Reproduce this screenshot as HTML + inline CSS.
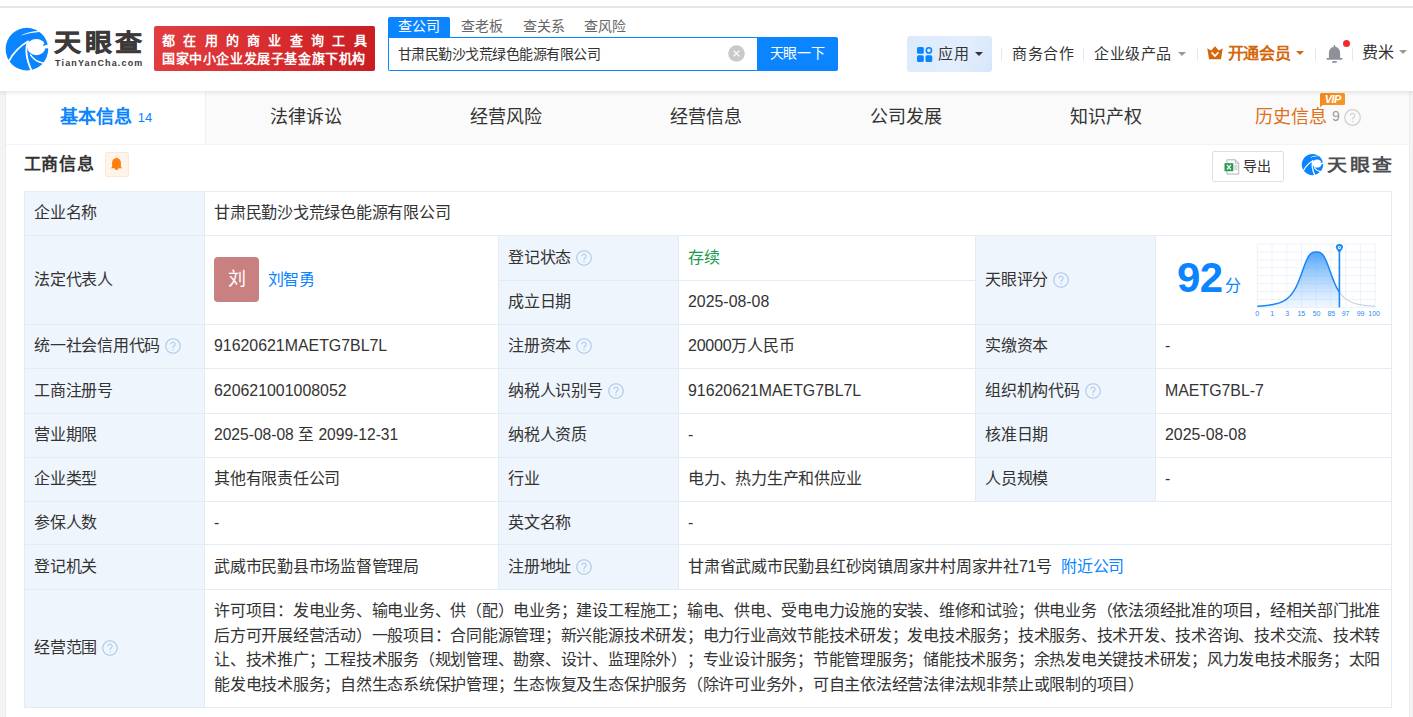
<!DOCTYPE html><html lang="zh-CN"><head><meta charset="utf-8"><style>
*{box-sizing:border-box;margin:0;padding:0}
html,body{width:1413px;height:717px;overflow:hidden}
body{position:relative;background:#f4f4f4;text-spacing-trim:space-all;font-family:"Liberation Sans",sans-serif;color:#333}
.a{position:absolute;white-space:nowrap}
.t{position:absolute;white-space:nowrap;font-size:16px;letter-spacing:-0.24px;line-height:20px;color:#333}
.n{letter-spacing:0;font-size:15.9px}
.hl{position:absolute;height:1px;background:#e3ecf5}
.vl{position:absolute;width:1px;background:#e3ecf5}
.lab{position:absolute;background:#eff5fc}
.q{display:inline-block;width:16px;height:16px;vertical-align:-3px;margin-left:5px}
.tab{position:absolute;height:53px;text-align:center;font-size:18px;line-height:53px;color:#333}
.nav{position:absolute;font-size:15px;letter-spacing:0.5px;line-height:20px;color:#333;white-space:nowrap}
.sep{position:absolute;width:1px;height:13px;background:#e6e9ee;top:47.5px}
.caret{position:absolute;width:0;height:0;border-left:4px solid transparent;border-right:4px solid transparent;border-top:4.5px solid #999}
</style></head><body>
<div class="a" style="left:0;top:0;width:1413px;height:6px;background:#fff"></div>
<div class="a" style="left:0;top:6px;width:1413px;height:2px;background:#e6e6e6"></div>
<div class="a" style="left:0;top:8px;width:1413px;height:83px;background:#fff"></div>
<svg class="a" style="left:4px;top:26px" width="48" height="46" viewBox="0 0 48 46"><circle cx="22.9" cy="23.1" r="21.3" fill="#0a84ff"/><ellipse cx="32.3" cy="21.1" rx="9.2" ry="8.1" fill="#fff"/><path d="M38 19.2 L45 18.6 L45 22.2 L39 22.6 Z" fill="#fff"/><path d="M41.2 16.6 C42.2 17.8 42.3 19.2 41.2 19.6 L38.5 19.8 Z" fill="#0a84ff"/><path d="M16 9.8 Q25 5.0 35.2 5.0 L35.2 5.9 Q25.5 6.6 16 9.8 Z" fill="#fff"/><path d="M5.0 35 Q11.5 22.5 24.6 15.0" fill="none" stroke="#fff" stroke-width="1.7"/><path d="M24.2 15.2 C21.4 22 21.6 32 27.6 44.8" fill="none" stroke="#fff" stroke-width="1.9"/><path d="M26.2 28.4 Q30.5 35.6 39.6 37.2" fill="none" stroke="#fff" stroke-width="1.4"/></svg>
<div class="a" style="left:54px;top:24px;font-size:27px;line-height:36px;font-weight:bold;letter-spacing:3.6px;color:#3d3939;-webkit-text-stroke:0.6px #3d3939;transform:scaleY(0.875);transform-origin:0 30px">天眼查</div>
<div class="a" style="left:55px;top:57px;font-size:9px;line-height:12px;font-weight:bold;letter-spacing:1.15px;color:#3d3939">TianYanCha.com</div>
<div class="a" style="left:154px;top:26px;width:221px;height:44.6px;border-radius:2px;background:linear-gradient(100deg,#e23d3f 0%,#d62a2d 60%,#c81e22 100%)"></div>
<div class="a" style="left:162px;top:32px;font-size:13px;line-height:18px;font-weight:bold;letter-spacing:8.3px;color:#fff">都在用的商业查询工具</div>
<div class="a" style="left:162px;top:50px;font-size:13px;line-height:18px;font-weight:bold;letter-spacing:0.6px;color:#fff">国家中小企业发展子基金旗下机构</div>
<div class="a" style="left:388px;top:17px;width:61.5px;height:21px;background:#0a84ff;border-radius:2px 2px 0 0"></div>
<div class="a" style="left:397.5px;top:16px;font-size:14px;line-height:20px;color:#fff">查公司</div>
<div class="a" style="left:460.5px;top:16px;font-size:14px;line-height:20px;color:#666">查老板</div>
<div class="a" style="left:522.5px;top:16px;font-size:14px;line-height:20px;color:#666">查关系</div>
<div class="a" style="left:584px;top:16px;font-size:14px;line-height:20px;color:#666">查风险</div>
<div class="a" style="left:388px;top:37px;width:370px;height:33.6px;border:1px solid #0a84ff;border-right:none;border-radius:0 0 0 2px;background:#fff"></div>
<div class="a" style="left:397.5px;top:44px;font-size:14px;line-height:20px;letter-spacing:-0.5px;color:#333">甘肃民勤沙戈荒绿色能源有限公司</div>
<svg class="a" style="left:727.5px;top:44.5px" width="17" height="17" viewBox="0 0 17 17"><circle cx="8.5" cy="8.5" r="8.3" fill="#c9c9c9"/><path d="M5.6 5.6 L11.4 11.4 M11.4 5.6 L5.6 11.4" stroke="#fff" stroke-width="1.3"/></svg>
<div class="a" style="left:757px;top:37px;width:81px;height:33.6px;background:#0a84ff;border-radius:0 2px 2px 0"></div>
<div class="a" style="left:769.5px;top:43px;font-size:14px;line-height:20px;letter-spacing:-0.2px;color:#fff">天眼一下</div>
<div class="a" style="left:907px;top:36px;width:85px;height:36px;border-radius:3px;background:linear-gradient(120deg,#dceafb 0%,#e2eefc 60%,#d6e6fa 100%)"></div>
<svg class="a" style="left:917px;top:46.5px" width="16" height="16" viewBox="0 0 16 16"><rect x="0" y="0" width="6.8" height="6.8" rx="1.5" fill="#0a84ff"/><rect x="0" y="8.3" width="6.8" height="6.8" rx="1.5" fill="#0a84ff"/><rect x="8.5" y="8.3" width="6.8" height="6.8" rx="1.5" fill="#0a84ff"/><circle cx="11.9" cy="3.4" r="2.6" fill="none" stroke="#0a84ff" stroke-width="1.6"/></svg>
<div class="nav" style="left:938px;top:43.5px">应用</div>
<div class="caret" style="left:975px;top:52px;border-top-color:#333"></div>
<div class="sep" style="left:1001px"></div>
<div class="nav" style="left:1012px;top:43.5px">商务合作</div>
<div class="sep" style="left:1083px"></div>
<div class="nav" style="left:1094px;top:43.5px">企业级产品</div>
<div class="caret" style="left:1178px;top:51.5px"></div>
<div class="sep" style="left:1197px"></div>
<svg class="a" style="left:1207px;top:45.8px" width="16" height="14" viewBox="0 0 16 14"><path d="M0.3 2.2 L4.2 4.6 L8 0.3 L11.8 4.6 L15.7 2.2 L14 13.3 L2 13.3 Z" fill="#d4670c"/><path d="M4.6 6.3 L8 10 L11.4 6.3" fill="none" stroke="#fff" stroke-width="1.8"/></svg>
<div class="nav" style="left:1227.5px;top:44px;font-size:16px;color:#d4670c;font-weight:bold;letter-spacing:-0.3px">开通会员</div>
<div class="caret" style="left:1295.5px;top:51px;border-top-color:#d4670c"></div>
<div class="sep" style="left:1315px"></div>
<svg class="a" style="left:1325.6px;top:45px" width="17" height="19" viewBox="0 0 17 19"><rect x="7.8" y="0" width="1.4" height="2.5" rx=".6" fill="#8e9197"/><path d="M2.9 13.6 L2.9 8 C2.9 4.4 5.4 1.8 8.5 1.8 C11.6 1.8 14.1 4.4 14.1 8 L14.1 13.6 Z" fill="#8e9197"/><rect x="0.5" y="13" width="16" height="1.7" rx=".8" fill="#8e9197"/><rect x="6.2" y="16" width="4.6" height="1.8" rx=".6" fill="#8e9197"/></svg>
<div class="a" style="left:1342.9px;top:40.4px;width:7px;height:7px;border-radius:50%;background:#f5282f"></div>
<div class="sep" style="left:1352px"></div>
<div class="nav" style="left:1361.5px;top:42.5px;font-size:16px;letter-spacing:0">费米</div>
<div class="caret" style="left:1399px;top:50px"></div>
<div class="a" style="left:5px;top:91px;width:1px;height:626px;background:#ececec"></div>
<div class="a" style="left:1409px;top:91px;width:1px;height:626px;background:#ececec"></div>
<div class="a" style="left:6px;top:91px;width:1403px;height:626px;background:#fff"></div>
<div class="a" style="left:6px;top:91px;width:1403px;height:54px;background:#fafafa;border-bottom:1px solid #f4f4f4"></div>
<div class="a" style="left:6px;top:91px;width:199.4px;height:53px;background:#fff"></div>
<div class="tab" style="left:6px;top:91px;width:200px;color:#0a84ff;font-weight:bold">基本信息<span style="font-weight:normal;font-size:13px;margin-left:6px;position:relative;top:-1.5px">14</span></div>
<div class="tab" style="left:206px;top:91px;width:200px">法律诉讼</div>
<div class="tab" style="left:406px;top:91px;width:200px">经营风险</div>
<div class="tab" style="left:606px;top:91px;width:200px">经营信息</div>
<div class="tab" style="left:806px;top:91px;width:200px">公司发展</div>
<div class="tab" style="left:1006px;top:91px;width:200px">知识产权</div>
<div class="tab" style="left:1206px;top:91px;width:200px;color:#e0701a;padding-left:4px">历史信息<span style="color:#999;font-size:14px;margin-left:5px;position:relative;top:-2px">9</span><svg style="display:inline-block;vertical-align:-2.5px;margin-left:4px" width="17" height="17" viewBox="0 0 17 17"><circle cx="8.5" cy="8.5" r="7.8" fill="none" stroke="#cfcfcf" stroke-width="1.2"/><path d="M6.3 6.5a2.2 2.2 0 1 1 3.3 1.9c-.7.4-1.1.8-1.1 1.7v.5" fill="none" stroke="#cfcfcf" stroke-width="1.2"/><circle cx="8.5" cy="12.5" r=".8" fill="#cfcfcf"/></svg></div>
<div class="a" style="left:205px;top:91px;width:1px;height:53px;background:#f1f1f1"></div>
<div class="a" style="left:0;top:91px;width:1413px;height:5px;background:linear-gradient(rgba(0,0,0,0.075),rgba(0,0,0,0))"></div>
<svg class="a" style="left:1320px;top:92.8px" width="26" height="15" viewBox="0 0 26 15"><defs><linearGradient id="vg" x1="0" y1="0" x2="1" y2="1"><stop offset="0" stop-color="#f08518"/><stop offset="1" stop-color="#f89a2c"/></linearGradient></defs><path d="M1.5 0 H23.5 A1.5 1.5 0 0 1 25 1.5 V10.5 A1.5 1.5 0 0 1 23.5 12 H3 L0 14.2 V1.5 A1.5 1.5 0 0 1 1.5 0 Z" fill="url(#vg)"/><text x="12.8" y="10" font-family="Liberation Sans" font-size="11" font-weight="bold" font-style="italic" fill="#fff" text-anchor="middle" letter-spacing="-0.6">VIP</text></svg>
<div class="a" style="left:23.5px;top:151.5px;font-size:17px;line-height:26px;font-weight:bold;color:#333;letter-spacing:0.75px">工商信息</div>
<div class="a" style="left:105px;top:152px;width:24px;height:25px;background:#fff4ea;border:1px solid #ffe6d2;border-radius:2px"></div>
<svg class="a" style="left:110px;top:156.5px" width="13" height="14" viewBox="0 0 13 14"><path d="M6.5 0.4 C6.9 0.4 7.1 0.7 7.1 1.1 C9.7 1.6 10.9 3.6 10.9 6 L10.9 10 L12.4 11.2 L0.6 11.2 L2.1 10 L2.1 6 C2.1 3.6 3.3 1.6 5.9 1.1 C5.9 0.7 6.1 0.4 6.5 0.4 Z" fill="#ff7f0e"/><path d="M4.6 11 A1.9 1.9 0 0 0 8.4 11 Z" fill="#ff7f0e"/></svg>
<div class="a" style="left:1212px;top:151px;width:71.5px;height:30.5px;border:1px solid #e0e0e0;border-radius:2px;background:#fff"></div>
<svg class="a" style="left:1223.5px;top:158.5px" width="16" height="16" viewBox="0 0 16 16"><path d="M2.9 0.8 H11.3 L14.7 4.2 V15.1 H2.9 Z" fill="#fff" stroke="#aeb3ba" stroke-width="1"/><path d="M11.3 0.8 V4.2 H14.7" fill="none" stroke="#aeb3ba" stroke-width="0.9"/><rect x="10.3" y="5.8" width="3" height="5.5" fill="#d5d8dc"/><rect x="0.5" y="4.2" width="8.8" height="8" fill="#1f9d4c"/><path d="M2.9 5.9 L6.9 10.5 M6.9 5.9 L2.9 10.5" stroke="#fff" stroke-width="1.3"/></svg>
<div class="a" style="left:1243px;top:156px;font-size:14px;line-height:20px;color:#333">导出</div>
<svg class="a" style="left:1301px;top:152.6px" width="24" height="23" viewBox="0 0 48 46"><circle cx="22.9" cy="23.1" r="21.3" fill="#0a84ff"/><ellipse cx="32.3" cy="21.1" rx="9.2" ry="8.1" fill="#fff"/><path d="M38 19.2 L45 18.6 L45 22.2 L39 22.6 Z" fill="#fff"/><path d="M41.2 16.6 C42.2 17.8 42.3 19.2 41.2 19.6 L38.5 19.8 Z" fill="#0a84ff"/><path d="M16 9.8 Q25 5.0 35.2 5.0 L35.2 5.9 Q25.5 6.6 16 9.8 Z" fill="#fff"/><path d="M5.0 35 Q11.5 22.5 24.6 15.0" fill="none" stroke="#fff" stroke-width="2.4"/><path d="M24.2 15.2 C21.4 22 21.6 32 27.6 44.8" fill="none" stroke="#fff" stroke-width="2.6"/><path d="M26.2 28.4 Q30.5 35.6 39.6 37.2" fill="none" stroke="#fff" stroke-width="2.2"/></svg>
<div class="a" style="left:1327px;top:151.3px;font-size:20px;line-height:26px;font-weight:bold;letter-spacing:2.6px;color:#4b4d51;transform:scaleY(0.85);transform-origin:0 21px">天眼查</div>
<div class="lab" style="left:24px;top:191px;width:180px;height:517px"></div>
<div class="lab" style="left:498px;top:235px;width:180px;height:354px"></div>
<div class="lab" style="left:975px;top:235px;width:180px;height:266px"></div>
<div class="hl" style="left:24px;top:191px;width:1368px"></div>
<div class="hl" style="left:24px;top:235px;width:1368px"></div>
<div class="hl" style="left:498px;top:280px;width:477px"></div>
<div class="hl" style="left:24px;top:324px;width:1368px"></div>
<div class="hl" style="left:24px;top:368px;width:1368px"></div>
<div class="hl" style="left:24px;top:413px;width:1368px"></div>
<div class="hl" style="left:24px;top:457px;width:1368px"></div>
<div class="hl" style="left:24px;top:501px;width:1368px"></div>
<div class="hl" style="left:24px;top:544px;width:1368px"></div>
<div class="hl" style="left:24px;top:589px;width:1368px"></div>
<div class="hl" style="left:24px;top:707px;width:1368px"></div>
<div class="vl" style="left:24px;top:191px;height:517px"></div>
<div class="vl" style="left:204px;top:191px;height:517px"></div>
<div class="vl" style="left:1391px;top:191px;height:517px"></div>
<div class="vl" style="left:498px;top:235px;height:354px"></div>
<div class="vl" style="left:678px;top:235px;height:354px"></div>
<div class="vl" style="left:975px;top:235px;height:266px"></div>
<div class="vl" style="left:1155px;top:235px;height:266px"></div>
<div class="t" style="left:34px;top:203.00px;">企业名称</div>
<div class="t" style="left:34px;top:269.50px;">法定代表人</div>
<div class="t" style="left:34px;top:336.00px;">统一社会信用代码<svg class="q" viewBox="0 0 16 16"><circle cx="8" cy="8" r="7.3" fill="none" stroke="#a9c8ea" stroke-width="1.1"/><path d="M5.9 6.2a2.1 2.1 0 1 1 3.2 1.8c-.7.4-1.1.8-1.1 1.6v.5" fill="none" stroke="#a9c8ea" stroke-width="1.1"/><circle cx="8" cy="11.8" r=".7" fill="#a9c8ea"/></svg></div>
<div class="t" style="left:34px;top:380.50px;">工商注册号</div>
<div class="t" style="left:34px;top:425.00px;">营业期限</div>
<div class="t" style="left:34px;top:469.00px;">企业类型</div>
<div class="t" style="left:34px;top:512.50px;">参保人数</div>
<div class="t" style="left:34px;top:556.50px;">登记机关</div>
<div class="t" style="left:34px;top:638.00px;">经营范围<svg class="q" viewBox="0 0 16 16"><circle cx="8" cy="8" r="7.3" fill="none" stroke="#a9c8ea" stroke-width="1.1"/><path d="M5.9 6.2a2.1 2.1 0 1 1 3.2 1.8c-.7.4-1.1.8-1.1 1.6v.5" fill="none" stroke="#a9c8ea" stroke-width="1.1"/><circle cx="8" cy="11.8" r=".7" fill="#a9c8ea"/></svg></div>
<div class="t" style="left:214px;top:203.00px;">甘肃民勤沙戈荒绿色能源有限公司</div>
<div class="t n" style="left:214px;top:336.00px;">91620621MAETG7BL7L</div>
<div class="t n" style="left:214px;top:380.50px;">620621001008052</div>
<div class="t n" style="left:214px;top:425.00px;"><span style="font-size:15.6px">2025-08-08 至 2099-12-31</span></div>
<div class="t" style="left:214px;top:469.00px;">其他有限责任公司</div>
<div class="t n" style="left:214px;top:512.50px;">-</div>
<div class="t" style="left:214px;top:556.50px;">武威市民勤县市场监督管理局</div>
<div class="t" style="left:508px;top:247.50px;">登记状态<svg class="q" viewBox="0 0 16 16"><circle cx="8" cy="8" r="7.3" fill="none" stroke="#a9c8ea" stroke-width="1.1"/><path d="M5.9 6.2a2.1 2.1 0 1 1 3.2 1.8c-.7.4-1.1.8-1.1 1.6v.5" fill="none" stroke="#a9c8ea" stroke-width="1.1"/><circle cx="8" cy="11.8" r=".7" fill="#a9c8ea"/></svg></div>
<div class="t" style="left:508px;top:292.00px;">成立日期</div>
<div class="t" style="left:508px;top:336.00px;">注册资本<svg class="q" viewBox="0 0 16 16"><circle cx="8" cy="8" r="7.3" fill="none" stroke="#a9c8ea" stroke-width="1.1"/><path d="M5.9 6.2a2.1 2.1 0 1 1 3.2 1.8c-.7.4-1.1.8-1.1 1.6v.5" fill="none" stroke="#a9c8ea" stroke-width="1.1"/><circle cx="8" cy="11.8" r=".7" fill="#a9c8ea"/></svg></div>
<div class="t" style="left:508px;top:380.50px;">纳税人识别号<svg class="q" viewBox="0 0 16 16"><circle cx="8" cy="8" r="7.3" fill="none" stroke="#a9c8ea" stroke-width="1.1"/><path d="M5.9 6.2a2.1 2.1 0 1 1 3.2 1.8c-.7.4-1.1.8-1.1 1.6v.5" fill="none" stroke="#a9c8ea" stroke-width="1.1"/><circle cx="8" cy="11.8" r=".7" fill="#a9c8ea"/></svg></div>
<div class="t" style="left:508px;top:425.00px;">纳税人资质</div>
<div class="t" style="left:508px;top:469.00px;">行业</div>
<div class="t" style="left:508px;top:512.50px;">英文名称</div>
<div class="t" style="left:508px;top:556.50px;">注册地址<svg class="q" viewBox="0 0 16 16"><circle cx="8" cy="8" r="7.3" fill="none" stroke="#a9c8ea" stroke-width="1.1"/><path d="M5.9 6.2a2.1 2.1 0 1 1 3.2 1.8c-.7.4-1.1.8-1.1 1.6v.5" fill="none" stroke="#a9c8ea" stroke-width="1.1"/><circle cx="8" cy="11.8" r=".7" fill="#a9c8ea"/></svg></div>
<div class="t" style="left:688px;top:247.50px;"><span style="color:#1a9a4a">存续</span></div>
<div class="t n" style="left:688px;top:292.00px;">2025-08-08</div>
<div class="t" style="left:688px;top:336.00px;">20000万人民币</div>
<div class="t n" style="left:688px;top:380.50px;">91620621MAETG7BL7L</div>
<div class="t n" style="left:688px;top:425.00px;">-</div>
<div class="t" style="left:688px;top:469.00px;">电力、热力生产和供应业</div>
<div class="t n" style="left:688px;top:512.50px;">-</div>
<div class="t" style="left:688px;top:556.50px;">甘肃省武威市民勤县红砂岗镇周家井村周家井社71号<span style="color:#0a84ff;margin-left:9px">附近公司</span></div>
<div class="t" style="left:985px;top:269.50px;">天眼评分<svg class="q" viewBox="0 0 16 16"><circle cx="8" cy="8" r="7.3" fill="none" stroke="#a9c8ea" stroke-width="1.1"/><path d="M5.9 6.2a2.1 2.1 0 1 1 3.2 1.8c-.7.4-1.1.8-1.1 1.6v.5" fill="none" stroke="#a9c8ea" stroke-width="1.1"/><circle cx="8" cy="11.8" r=".7" fill="#a9c8ea"/></svg></div>
<div class="t" style="left:985px;top:336.00px;">实缴资本</div>
<div class="t" style="left:985px;top:380.50px;">组织机构代码<svg class="q" viewBox="0 0 16 16"><circle cx="8" cy="8" r="7.3" fill="none" stroke="#a9c8ea" stroke-width="1.1"/><path d="M5.9 6.2a2.1 2.1 0 1 1 3.2 1.8c-.7.4-1.1.8-1.1 1.6v.5" fill="none" stroke="#a9c8ea" stroke-width="1.1"/><circle cx="8" cy="11.8" r=".7" fill="#a9c8ea"/></svg></div>
<div class="t" style="left:985px;top:425.00px;">核准日期</div>
<div class="t" style="left:985px;top:469.00px;">人员规模</div>
<div class="t n" style="left:1165px;top:336.00px;">-</div>
<div class="t n" style="left:1165px;top:380.50px;">MAETG7BL-7</div>
<div class="t n" style="left:1165px;top:425.00px;">2025-08-08</div>
<div class="t n" style="left:1165px;top:469.00px;">-</div>
<div class="a" style="left:214px;top:257px;width:45px;height:45px;border-radius:4px;background:#c98080;color:#fff;font-size:18px;line-height:45px;text-align:center">刘</div>
<div class="t" style="left:267.5px;top:269.50px;"><span style="color:#0a84ff">刘智勇</span></div>
<div class="a" style="left:1177px;top:253px;font-size:42px;line-height:50px;font-weight:bold;color:#0a84ff;letter-spacing:-0.5px">92</div>
<div class="a" style="left:1225px;top:275px;font-size:16px;line-height:22px;color:#0a84ff">分</div>
<svg class="a" style="left:1250px;top:240px" width="135" height="80" viewBox="0 0 135 80"><defs><linearGradient id="cg" x1="0" y1="0" x2="0" y2="1"><stop offset="0" stop-color="#3d9bfb" stop-opacity=".9"/><stop offset="1" stop-color="#8cc2ff" stop-opacity=".12"/></linearGradient></defs><line x1="7.30" y1="4.00" x2="7.30" y2="67.40" stroke="#edf2f9" stroke-width="1"/><line x1="22.04" y1="4.00" x2="22.04" y2="67.40" stroke="#edf2f9" stroke-width="1"/><line x1="36.77" y1="4.00" x2="36.77" y2="67.40" stroke="#edf2f9" stroke-width="1"/><line x1="51.51" y1="4.00" x2="51.51" y2="67.40" stroke="#edf2f9" stroke-width="1"/><line x1="66.25" y1="4.00" x2="66.25" y2="67.40" stroke="#edf2f9" stroke-width="1"/><line x1="80.99" y1="4.00" x2="80.99" y2="67.40" stroke="#edf2f9" stroke-width="1"/><line x1="95.73" y1="4.00" x2="95.73" y2="67.40" stroke="#edf2f9" stroke-width="1"/><line x1="110.46" y1="4.00" x2="110.46" y2="67.40" stroke="#edf2f9" stroke-width="1"/><line x1="125.20" y1="4.00" x2="125.20" y2="67.40" stroke="#edf2f9" stroke-width="1"/><line x1="7.30" y1="4.00" x2="125.20" y2="4.00" stroke="#edf2f9" stroke-width="1"/><line x1="7.30" y1="11.92" x2="125.20" y2="11.92" stroke="#edf2f9" stroke-width="1"/><line x1="7.30" y1="19.85" x2="125.20" y2="19.85" stroke="#edf2f9" stroke-width="1"/><line x1="7.30" y1="27.77" x2="125.20" y2="27.77" stroke="#edf2f9" stroke-width="1"/><line x1="7.30" y1="35.70" x2="125.20" y2="35.70" stroke="#edf2f9" stroke-width="1"/><line x1="7.30" y1="43.62" x2="125.20" y2="43.62" stroke="#edf2f9" stroke-width="1"/><line x1="7.30" y1="51.55" x2="125.20" y2="51.55" stroke="#edf2f9" stroke-width="1"/><line x1="7.30" y1="59.47" x2="125.20" y2="59.47" stroke="#edf2f9" stroke-width="1"/><line x1="7.30" y1="67.40" x2="125.20" y2="67.40" stroke="#edf2f9" stroke-width="1"/><path d="M7.30 66.25 L8.28 66.19 L9.26 66.13 L10.25 66.06 L11.23 65.99 L12.21 65.91 L13.19 65.82 L14.18 65.73 L15.16 65.63 L16.14 65.53 L17.12 65.41 L18.11 65.29 L19.09 65.16 L20.07 65.01 L21.05 64.85 L22.04 64.68 L23.02 64.50 L24.00 64.30 L24.98 64.07 L25.97 63.83 L26.95 63.57 L27.93 63.28 L28.91 62.96 L29.90 62.61 L30.88 62.23 L31.86 61.80 L32.84 61.33 L33.83 60.82 L34.81 60.24 L35.79 59.61 L36.77 58.90 L37.76 58.12 L38.74 57.25 L39.72 56.28 L40.70 55.20 L41.69 54.01 L42.67 52.68 L43.65 51.21 L44.63 49.59 L45.62 47.81 L46.60 45.86 L47.58 43.73 L48.56 41.44 L49.55 38.99 L50.53 36.41 L51.51 33.73 L52.49 30.98 L53.48 28.24 L54.46 25.56 L55.44 23.00 L56.42 20.64 L57.41 18.54 L58.39 16.74 L59.37 15.25 L60.35 14.10 L61.34 13.25 L62.32 12.68 L63.30 12.34 L64.28 12.17 L65.27 12.11 L66.25 12.10 L67.23 12.11 L68.22 12.17 L69.20 12.34 L70.18 12.68 L71.16 13.25 L72.15 14.10 L73.13 15.25 L74.11 16.74 L75.09 18.54 L76.08 20.64 L77.06 23.00 L78.04 25.56 L79.02 28.24 L80.01 30.98 L80.99 33.73 L81.97 36.41 L82.95 38.99 L83.94 41.44 L84.92 43.73 L85.90 45.86 L86.88 47.81 L87.87 49.59 L88.85 51.21 L89.40 52.06 L89.40 67.40 L7.30 67.40 Z" fill="url(#cg)"/><path d="M89.40 52.06 L89.83 52.68 L90.81 54.01 L91.80 55.20 L92.78 56.28 L93.76 57.25 L94.74 58.12 L95.73 58.90 L96.71 59.61 L97.69 60.24 L98.67 60.82 L99.66 61.33 L100.64 61.80 L101.62 62.23 L102.60 62.61 L103.59 62.96 L104.57 63.28 L105.55 63.57 L106.53 63.83 L107.52 64.07 L108.50 64.30 L109.48 64.50 L110.46 64.68 L111.45 64.85 L112.43 65.01 L113.41 65.16 L114.39 65.29 L115.38 65.41 L116.36 65.53 L117.34 65.63 L118.32 65.73 L119.31 65.82 L120.29 65.91 L121.27 65.99 L122.25 66.06 L123.24 66.13 L124.22 66.19 L125.20 66.25" fill="none" stroke="#c8d3df" stroke-width="1.2"/><path d="M7.30 66.25 L8.28 66.19 L9.26 66.13 L10.25 66.06 L11.23 65.99 L12.21 65.91 L13.19 65.82 L14.18 65.73 L15.16 65.63 L16.14 65.53 L17.12 65.41 L18.11 65.29 L19.09 65.16 L20.07 65.01 L21.05 64.85 L22.04 64.68 L23.02 64.50 L24.00 64.30 L24.98 64.07 L25.97 63.83 L26.95 63.57 L27.93 63.28 L28.91 62.96 L29.90 62.61 L30.88 62.23 L31.86 61.80 L32.84 61.33 L33.83 60.82 L34.81 60.24 L35.79 59.61 L36.77 58.90 L37.76 58.12 L38.74 57.25 L39.72 56.28 L40.70 55.20 L41.69 54.01 L42.67 52.68 L43.65 51.21 L44.63 49.59 L45.62 47.81 L46.60 45.86 L47.58 43.73 L48.56 41.44 L49.55 38.99 L50.53 36.41 L51.51 33.73 L52.49 30.98 L53.48 28.24 L54.46 25.56 L55.44 23.00 L56.42 20.64 L57.41 18.54 L58.39 16.74 L59.37 15.25 L60.35 14.10 L61.34 13.25 L62.32 12.68 L63.30 12.34 L64.28 12.17 L65.27 12.11 L66.25 12.10 L67.23 12.11 L68.22 12.17 L69.20 12.34 L70.18 12.68 L71.16 13.25 L72.15 14.10 L73.13 15.25 L74.11 16.74 L75.09 18.54 L76.08 20.64 L77.06 23.00 L78.04 25.56 L79.02 28.24 L80.01 30.98 L80.99 33.73 L81.97 36.41 L82.95 38.99 L83.94 41.44 L84.92 43.73 L85.90 45.86 L86.88 47.81 L87.87 49.59 L88.85 51.21 L89.40 52.06" fill="none" stroke="#1a86f5" stroke-width="1.5"/><line x1="89.40" y1="12.50" x2="89.40" y2="67.40" stroke="#1a86f5" stroke-width="1.6"/><path d="M85.80 7.70 A3.6 3.6 0 1 1 93.00 7.70 L89.40 13.50 Z" fill="#1a86f5"/><circle cx="89.40" cy="7.60" r="1.6" fill="#fff"/><circle cx="89.40" cy="7.60" r="0.7" fill="#1a86f5"/><text x="7.30" y="76.00" font-family="Liberation Sans" font-size="7" fill="#2a8cf0" text-anchor="middle">0</text><text x="22.30" y="76.00" font-family="Liberation Sans" font-size="7" fill="#2a8cf0" text-anchor="middle">1</text><text x="37.30" y="76.00" font-family="Liberation Sans" font-size="7" fill="#2a8cf0" text-anchor="middle">3</text><text x="51.30" y="76.00" font-family="Liberation Sans" font-size="7" fill="#2a8cf0" text-anchor="middle">15</text><text x="66.60" y="76.00" font-family="Liberation Sans" font-size="7" fill="#2a8cf0" text-anchor="middle">50</text><text x="81.30" y="76.00" font-family="Liberation Sans" font-size="7" fill="#2a8cf0" text-anchor="middle">85</text><text x="95.60" y="76.00" font-family="Liberation Sans" font-size="7" fill="#2a8cf0" text-anchor="middle">97</text><text x="110.60" y="76.00" font-family="Liberation Sans" font-size="7" fill="#2a8cf0" text-anchor="middle">99</text><text x="124.10" y="76.00" font-family="Liberation Sans" font-size="7" fill="#2a8cf0" text-anchor="middle">100</text></svg>
<div class="t" style="left:214px;top:601.00px;">许可项目：发电业务、输电业务、供（配）电业务；建设工程施工；输电、供电、受电电力设施的安装、维修和试验；供电业务（依法须经批准的项目，经相关部门批准</div>
<div class="t" style="left:214px;top:625.50px;">后方可开展经营活动）一般项目：合同能源管理；新兴能源技术研发；电力行业高效节能技术研发；发电技术服务；技术服务、技术开发、技术咨询、技术交流、技术转</div>
<div class="t" style="left:214px;top:650.00px;">让、技术推广；工程技术服务（规划管理、勘察、设计、监理除外）；专业设计服务；节能管理服务；储能技术服务；余热发电关键技术研发；风力发电技术服务；太阳</div>
<div class="t" style="left:214px;top:674.50px;">能发电技术服务；自然生态系统保护管理；生态恢复及生态保护服务（除许可业务外，可自主依法经营法律法规非禁止或限制的项目）</div>
</body></html>
